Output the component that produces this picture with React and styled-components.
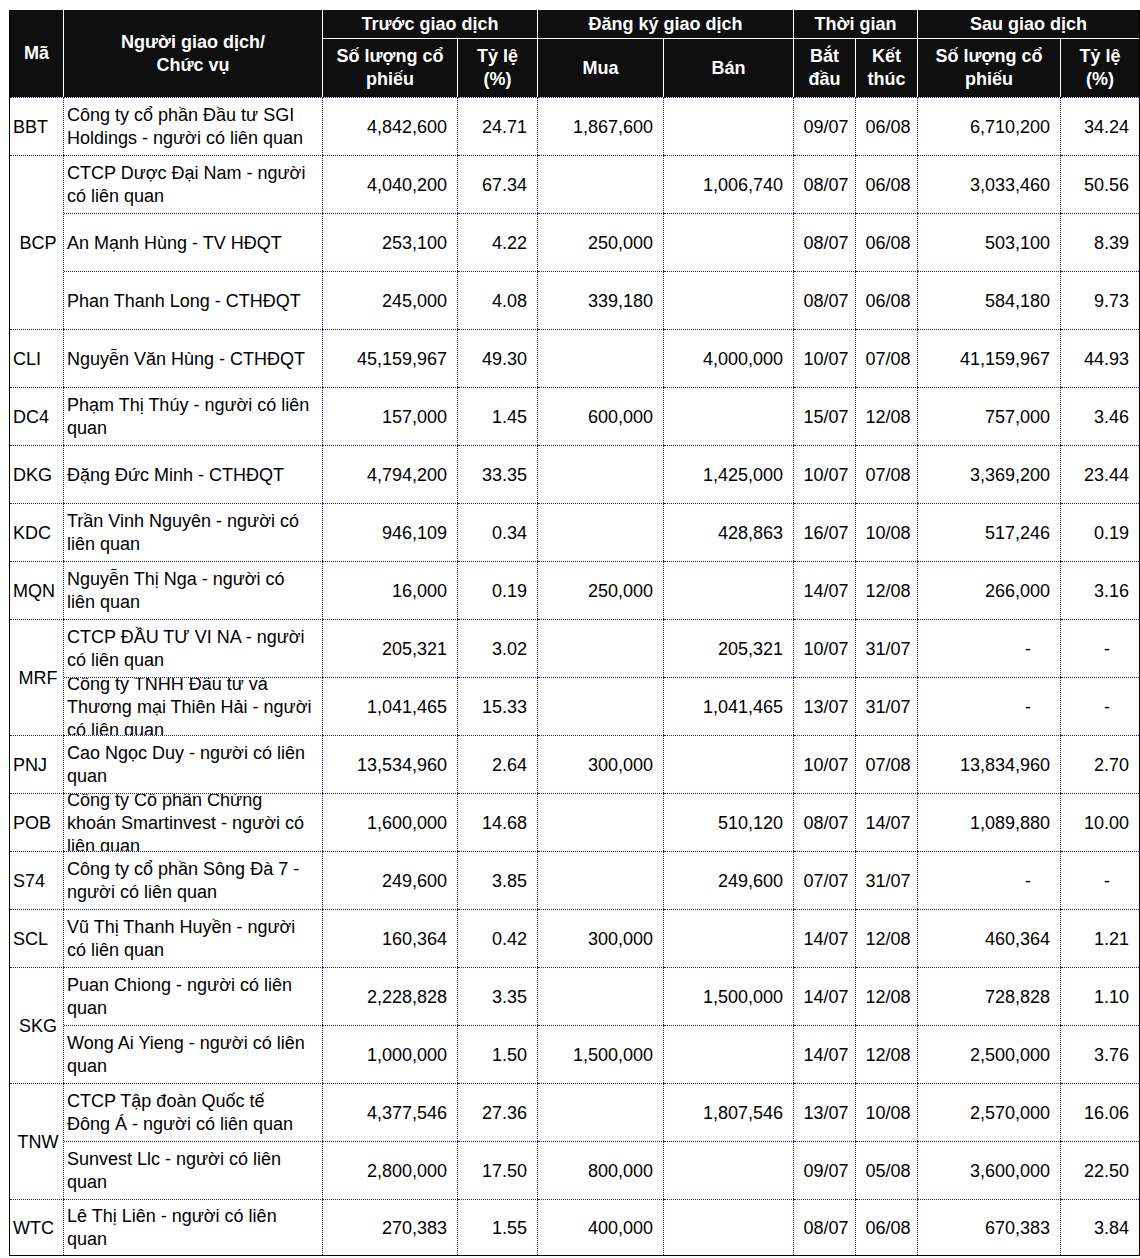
import React from 'react';
import styled, { createGlobalStyle } from 'styled-components';

const GlobalStyle = createGlobalStyle`
  body {
    margin: 0;
    background: #fff;
    font-family: 'Liberation Sans', Arial, sans-serif;
  }
`;

const DOT = '1px dotted #1a2766';

const Sheet = styled.div`
  display: grid;
  grid-template-columns: 54px 259px 135px 80px 126px 130px 62px 62px 143px 78px;
  grid-template-rows: 29px 58px repeat(19, 58px) 56px;
  width: 1131px;
  box-sizing: border-box;
  margin: 10px 0 0 9px;
  border-left: 1px solid #000;
  border-right: 1px solid #000;
  border-bottom: 1px solid #000;
  font-size: 18px;
  line-height: 23px;
  color: #000;
`;

const HeadCell = styled.div`
  box-sizing: border-box;
  display: flex;
  align-items: center;
  justify-content: center;
  text-align: center;
  background: #0f0f0f;
  color: #fff;
  font-weight: bold;
  grid-row: span ${p => p.$rows || 1};
  grid-column: span ${p => p.$cols || 1};
  border-right: ${p => (p.$last ? 'none' : '1px solid #fff')};
  border-bottom: ${p => (p.$group ? '1px solid #fff' : 'none')};
`;

const Cell = styled.div`
  box-sizing: border-box;
  display: flex;
  align-items: center;
  justify-content: ${p =>
    p.$align === 'right' ? 'flex-end' : p.$align === 'center' ? 'center' : 'flex-start'};
  text-align: ${p => p.$align || 'left'};
  padding: 1px ${p => (p.$pr != null ? p.$pr : 3)}px 0 3px;
  overflow: hidden;
  border-top: ${DOT};
  border-right: ${p => (p.$last ? 'none' : DOT)};
`;

const CodeCell = styled(Cell)`
  grid-row: span ${p => p.$rows};
  justify-content: ${p => (p.$rows > 1 ? 'center' : 'flex-start')};
  padding: 1px 0 0 3px;
`;

const groups = [
  { code: 'BBT', rows: [
    ['Công ty cổ phần Đầu tư SGI Holdings - người có liên quan', '4,842,600', '24.71', '1,867,600', '', '09/07', '06/08', '6,710,200', '34.24'],
  ] },
  { code: 'BCP', rows: [
    ['CTCP Dược Đại Nam - người có liên quan', '4,040,200', '67.34', '', '1,006,740', '08/07', '06/08', '3,033,460', '50.56'],
    ['An Mạnh Hùng - TV HĐQT', '253,100', '4.22', '250,000', '', '08/07', '06/08', '503,100', '8.39'],
    ['Phan Thanh Long - CTHĐQT', '245,000', '4.08', '339,180', '', '08/07', '06/08', '584,180', '9.73'],
  ] },
  { code: 'CLI', rows: [
    ['Nguyễn Văn Hùng - CTHĐQT', '45,159,967', '49.30', '', '4,000,000', '10/07', '07/08', '41,159,967', '44.93'],
  ] },
  { code: 'DC4', rows: [
    ['Phạm Thị Thúy - người có liên quan', '157,000', '1.45', '600,000', '', '15/07', '12/08', '757,000', '3.46'],
  ] },
  { code: 'DKG', rows: [
    ['Đặng Đức Minh - CTHĐQT', '4,794,200', '33.35', '', '1,425,000', '10/07', '07/08', '3,369,200', '23.44'],
  ] },
  { code: 'KDC', rows: [
    ['Trần Vinh Nguyên - người có liên quan', '946,109', '0.34', '', '428,863', '16/07', '10/08', '517,246', '0.19'],
  ] },
  { code: 'MQN', rows: [
    ['Nguyễn Thị Nga - người có liên quan', '16,000', '0.19', '250,000', '', '14/07', '12/08', '266,000', '3.16'],
  ] },
  { code: 'MRF', rows: [
    ['CTCP ĐẦU TƯ VI NA - người có liên quan', '205,321', '3.02', '', '205,321', '10/07', '31/07', '-', '-'],
    ['Công ty TNHH Đầu tư và Thương mại Thiên Hải - người có liên quan', '1,041,465', '15.33', '', '1,041,465', '13/07', '31/07', '-', '-'],
  ] },
  { code: 'PNJ', rows: [
    ['Cao Ngọc Duy - người có liên quan', '13,534,960', '2.64', '300,000', '', '10/07', '07/08', '13,834,960', '2.70'],
  ] },
  { code: 'POB', rows: [
    ['Công ty Cổ phần Chứng khoán Smartinvest - người có liên quan', '1,600,000', '14.68', '', '510,120', '08/07', '14/07', '1,089,880', '10.00'],
  ] },
  { code: 'S74', rows: [
    ['Công ty cổ phần Sông Đà 7 - người có liên quan', '249,600', '3.85', '', '249,600', '07/07', '31/07', '-', '-'],
  ] },
  { code: 'SCL', rows: [
    ['Vũ Thị Thanh Huyền - người có liên quan', '160,364', '0.42', '300,000', '', '14/07', '12/08', '460,364', '1.21'],
  ] },
  { code: 'SKG', rows: [
    ['Puan Chiong - người có liên quan', '2,228,828', '3.35', '', '1,500,000', '14/07', '12/08', '728,828', '1.10'],
    ['Wong Ai Yieng - người có liên quan', '1,000,000', '1.50', '1,500,000', '', '14/07', '12/08', '2,500,000', '3.76'],
  ] },
  { code: 'TNW', rows: [
    ['CTCP Tập đoàn Quốc tế Đông\u00a0Á - người có liên quan', '4,377,546', '27.36', '', '1,807,546', '13/07', '10/08', '2,570,000', '16.06'],
    ['Sunvest Llc - người có liên quan', '2,800,000', '17.50', '800,000', '', '09/07', '05/08', '3,600,000', '22.50'],
  ] },
  { code: 'WTC', rows: [
    ['Lê Thị Liên - người có liên quan', '270,383', '1.55', '400,000', '', '08/07', '06/08', '670,383', '3.84'],
  ] },
];

function DataRow({ row }) {
  const [name, sl, tl, mua, ban, start, end, sl2, tl2] = row;
  const pad = v => (v === '-' ? 29 : 10);
  return (
    <>
      <Cell $pr={9.5}>{name}</Cell>
      <Cell $align="right" $pr={10}>{sl}</Cell>
      <Cell $align="right" $pr={10}>{tl}</Cell>
      <Cell $align="right" $pr={10}>{mua}</Cell>
      <Cell $align="right" $pr={10}>{ban}</Cell>
      <Cell $align="center" $pr={0}>{start}</Cell>
      <Cell $align="center" $pr={0}>{end}</Cell>
      <Cell $align="right" $pr={pad(sl2)}>{sl2}</Cell>
      <Cell $align="right" $pr={pad(tl2)} $last>{tl2}</Cell>
    </>
  );
}

export default function App() {
  return (
    <>
      <GlobalStyle />
      <Sheet>
        <HeadCell $rows={2}>Mã</HeadCell>
        <HeadCell $rows={2}>Người giao dịch/<br />Chức vụ</HeadCell>
        <HeadCell $cols={2} $group>Trước giao dịch</HeadCell>
        <HeadCell $cols={2} $group>Đăng ký giao dịch</HeadCell>
        <HeadCell $cols={2} $group>Thời gian</HeadCell>
        <HeadCell $cols={2} $group $last>Sau giao dịch</HeadCell>
        <HeadCell>Số lượng cổ<br />phiếu</HeadCell>
        <HeadCell>Tỷ lệ<br />(%)</HeadCell>
        <HeadCell>Mua</HeadCell>
        <HeadCell>Bán</HeadCell>
        <HeadCell>Bắt<br />đầu</HeadCell>
        <HeadCell>Kết<br />thúc</HeadCell>
        <HeadCell>Số lượng cổ<br />phiếu</HeadCell>
        <HeadCell $last>Tỷ lệ<br />(%)</HeadCell>

        {groups.map(g => (
          <React.Fragment key={g.code}>
            <CodeCell $rows={g.rows.length}>{g.code}</CodeCell>
            {g.rows.map((r, i) => (
              <DataRow key={i} row={r} />
            ))}
          </React.Fragment>
        ))}
      </Sheet>
    </>
  );
}
